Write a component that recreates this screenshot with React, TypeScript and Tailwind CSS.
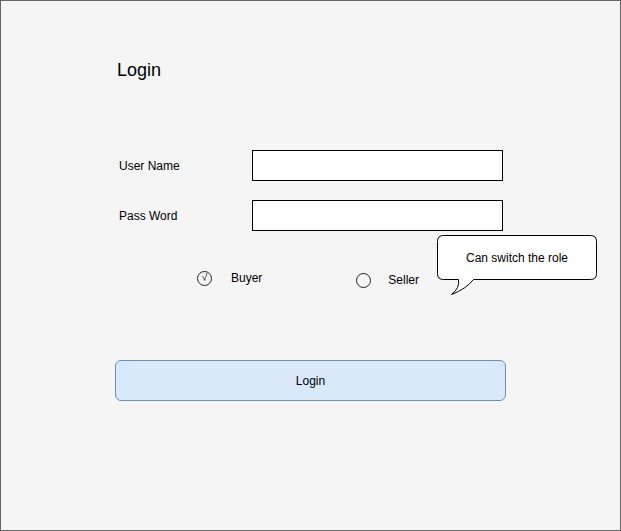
import React from "react"

const Radio = ({ checked }: { checked?: boolean }) => (
  <span className="flex h-[15px] w-[15px] items-center justify-center rounded-full border border-[#222] bg-transparent text-[10px] leading-none">
    {checked ? "√" : null}
  </span>
)

const Callout = () => (
  <div className="absolute left-[435px] top-[233px] h-[62px] w-[162px]">
    <svg width="162" height="62" viewBox="0 0 162 62" className="absolute left-0 top-0">
      <path
        d="M7.5,1.5 H154.5 Q160.5,1.5 160.5,7.5 V39.5 Q160.5,45.5 154.5,45.5 H37.5 Q30,55 15.5,60.5 Q24,54 22.5,45.5 H7.5 Q1.5,45.5 1.5,39.5 V7.5 Q1.5,1.5 7.5,1.5 Z"
        fill="#ffffff"
        stroke="#000000"
        strokeWidth="1"
      />
    </svg>
    <div className="relative flex h-[47px] w-[162px] items-center justify-center text-[12px]">
      Can switch the role
    </div>
  </div>
)

export default function App() {
  return (
    <div className="relative h-[531px] w-[621px] border border-[#666666] bg-[#f5f5f5] font-['Liberation_Sans',Arial,sans-serif] text-black">
      <div className="pl-[116px] pt-[59px]">
        <h1 className="h-[21px] text-[18px] leading-[21px]">Login</h1>

        <div className="mt-[69px] flex h-[31px] items-center">
          <label className="w-[135px] pl-[2px] text-[12px]">User Name</label>
          <div className="h-[31px] w-[251px] border border-black bg-white" />
        </div>
        <div className="mt-[19px] flex h-[31px] items-center">
          <label className="w-[135px] pl-[2px] text-[12px]">Pass Word</label>
          <div className="h-[31px] w-[251px] border border-black bg-white" />
        </div>

        <div className="mt-[38px] flex h-[19px] items-start text-[12px]">
          <div className="ml-[80px] flex items-center">
            <Radio checked />
            <span className="ml-[19px]">Buyer</span>
          </div>
          <div className="ml-[94px] mt-[2px] flex items-center">
            <Radio />
            <span className="ml-[17px]">Seller</span>
          </div>
        </div>

        <button className="-ml-[2px] mt-[72px] flex h-[41px] w-[391px] items-center justify-center rounded-[6px] border border-[#6c8ebf] bg-[#dae8fc] text-[12px]">
          Login
        </button>
      </div>

      <Callout />
    </div>
  )
}
